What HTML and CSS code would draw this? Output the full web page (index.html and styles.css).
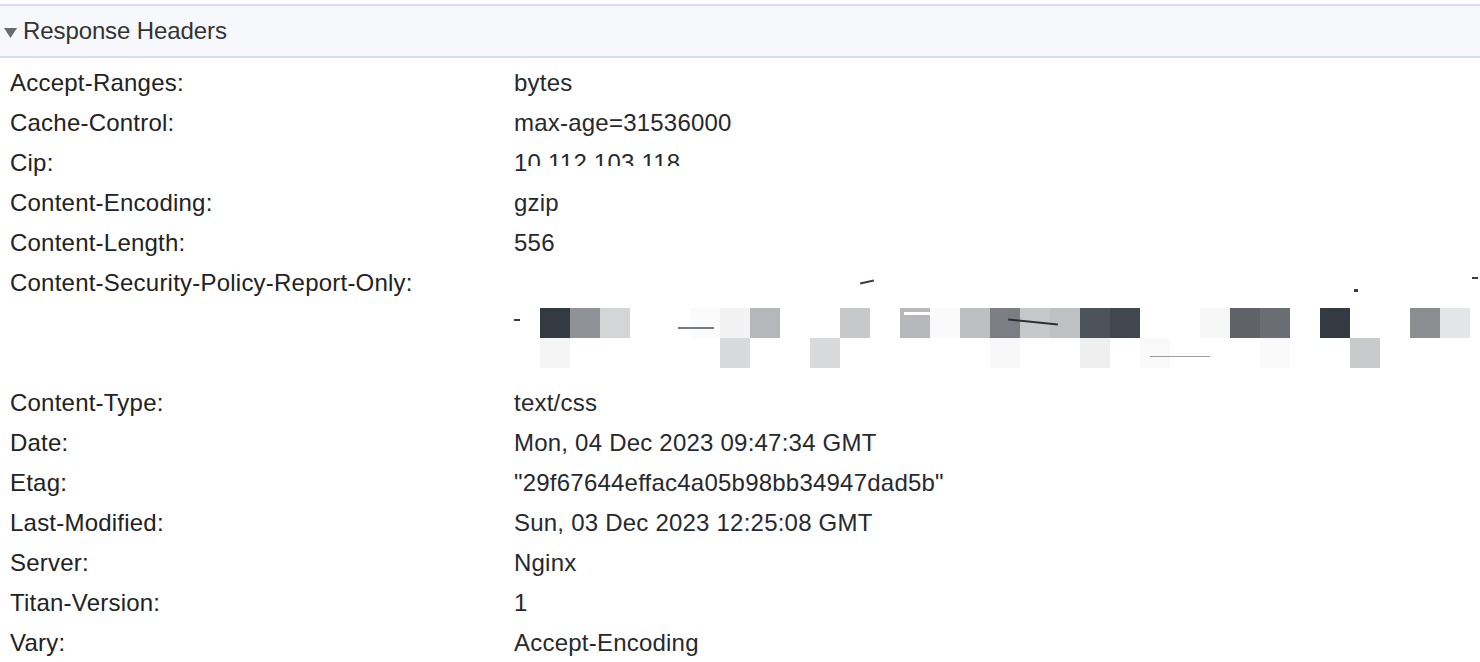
FILE: index.html
```html
<!DOCTYPE html>
<html lang="en">
<head>
<meta charset="utf-8">
<title>Response Headers</title>
<link rel="stylesheet" href="styles.css">
</head>
<body>
<div class="panel">
  <div class="section-header">
    <svg class="caret" width="13" height="10" viewBox="0 0 13 10"><polygon points="0,0 13,0 6.5,10" fill="#6b6b6b"/></svg>
    <span class="section-title">Response Headers</span>
  </div>
  <div class="rows">
    <div class="row"><div class="key">Accept-Ranges:</div><div class="val">bytes</div></div>
    <div class="row"><div class="key">Cache-Control:</div><div class="val">max-age=31536000</div></div>
    <div class="row"><div class="key">Cip:</div><div class="val"><span class="ip-lead">1</span><span class="ip-cut">0.112.103.118</span></div></div>
    <div class="row"><div class="key">Content-Encoding:</div><div class="val">gzip</div></div>
    <div class="row"><div class="key">Content-Length:</div><div class="val">556</div></div>
    <div class="row row-tall">
      <div class="key">Content-Security-Policy-Report-Only:</div>
      <div class="val redacted">
        <div class="pixels">
          <i style="background:#333a42"></i><i style="background:#8f9296"></i><i style="background:#d4d5d6"></i><i></i><i></i><i style="background:#fbfbfb"></i><i style="background:#f2f2f3"></i><i style="background:#b5b7ba"></i><i></i><i></i><i style="background:#c7c8c9"></i><i></i><i style="background:#b7b8bb"></i><i style="background:#fafafa"></i><i style="background:#bebfc0"></i><i style="background:#7c7e83"></i><i style="background:#c7c8c9"></i><i style="background:#bfc0c1"></i><i style="background:#4d535b"></i><i style="background:#424850"></i><i></i><i></i><i style="background:#f6f6f6"></i><i style="background:#5f6268"></i><i style="background:#6a6d73"></i><i></i><i style="background:#333a42"></i><i></i><i></i><i style="background:#8b8d91"></i><i style="background:#e4e5e6"></i>
          <i style="background:#f5f5f5"></i><i></i><i></i><i></i><i></i><i></i><i style="background:#d8d9da"></i><i></i><i></i><i style="background:#d8d9da"></i><i></i><i></i><i></i><i></i><i></i><i style="background:#f8f8f8"></i><i></i><i></i><i style="background:#efeff0"></i><i></i><i style="background:#f9f9f9"></i><i></i><i></i><i></i><i style="background:#fafafa"></i><i></i><i></i><i style="background:#c9cacb"></i><i></i><i></i><i></i>
        </div>
        <span class="frag f1"></span>
        <span class="frag f2"></span>
        <span class="frag f3"></span>
        <span class="frag f4"></span>
        <span class="frag f5"></span>
        <span class="frag f6"></span>
        <span class="frag f7"></span>
        <span class="frag f8"></span>
      </div>
    </div>
    <div class="row"><div class="key">Content-Type:</div><div class="val">text/css</div></div>
    <div class="row"><div class="key">Date:</div><div class="val">Mon, 04 Dec 2023 09:47:34 GMT</div></div>
    <div class="row"><div class="key">Etag:</div><div class="val">"29f67644effac4a05b98bb34947dad5b"</div></div>
    <div class="row"><div class="key">Last-Modified:</div><div class="val">Sun, 03 Dec 2023 12:25:08 GMT</div></div>
    <div class="row"><div class="key">Server:</div><div class="val">Nginx</div></div>
    <div class="row"><div class="key">Titan-Version:</div><div class="val">1</div></div>
    <div class="row"><div class="key">Vary:</div><div class="val">Accept-Encoding</div></div>
  </div>
</div>
</body>
</html>
```
FILE: styles.css
```css
html, body {
  margin: 0;
  padding: 0;
  background: #ffffff;
  overflow: hidden;
}

body {
  font-family: "Liberation Sans", Arial, Helvetica, sans-serif;
  color: #222326;
}

.panel {
  padding-top: 4px;
}

.section-header {
  display: flex;
  align-items: center;
  height: 50px;
  background: #f6f8fc;
  border-top: 2px solid #d5def5;
  border-bottom: 2px solid #d5def5;
  padding-left: 4px;
  box-sizing: content-box;
}

.caret {
  display: block;
  margin-top: 3px;
  margin-right: 6px;
  flex: none;
}

.section-title {
  font-size: 24px;
  color: #333333;
  line-height: 50px;
  letter-spacing: -0.1px;
}

.rows {
  padding-top: 5px;
}

.row {
  display: grid;
  grid-template-columns: 514px 1fr;
  height: 40px;
  font-size: 24px;
  line-height: 40px;
  letter-spacing: 0.22px;
  white-space: nowrap;
}

.key {
  padding-left: 10px;
  color: #222222;
}

.val {
  color: #26292e;
}

.ip-lead {
  display: inline-block;
  vertical-align: top;
}

.ip-cut {
  display: inline-block;
  vertical-align: top;
  height: 23px;
  overflow: hidden;
}

.row-tall {
  height: 120px;
}

.redacted {
  position: relative;
}

.pixels {
  display: grid;
  grid-template-columns: repeat(31, 30px);
  grid-auto-rows: 30px;
  margin-top: 45px;
  margin-left: 26px;
}

.pixels i {
  display: block;
}

.frag {
  position: absolute;
  display: block;
  height: 2px;
  background: #3a3d42;
}

.f1 { left: 346px; top: 18px; width: 14px; transform: rotate(-12deg); }
.f2 { left: 0px; top: 56px; width: 6px; }
.f3 { left: 164px; top: 64px; width: 36px; background: #777a80; height: 2px; }
.f4 { left: 494px; top: 58px; width: 50px; background: #2c2f34; transform: rotate(6deg); }
.f5 { left: 390px; top: 49px; width: 30px; background: #ffffff; height: 3px; }
.f6 { left: 636px; top: 93px; width: 60px; background: #9a9ca0; height: 1px; }
.f7 { left: 840px; top: 26px; width: 4px; height: 3px; }
.f8 { left: 958px; top: 14px; width: 6px; }
```
